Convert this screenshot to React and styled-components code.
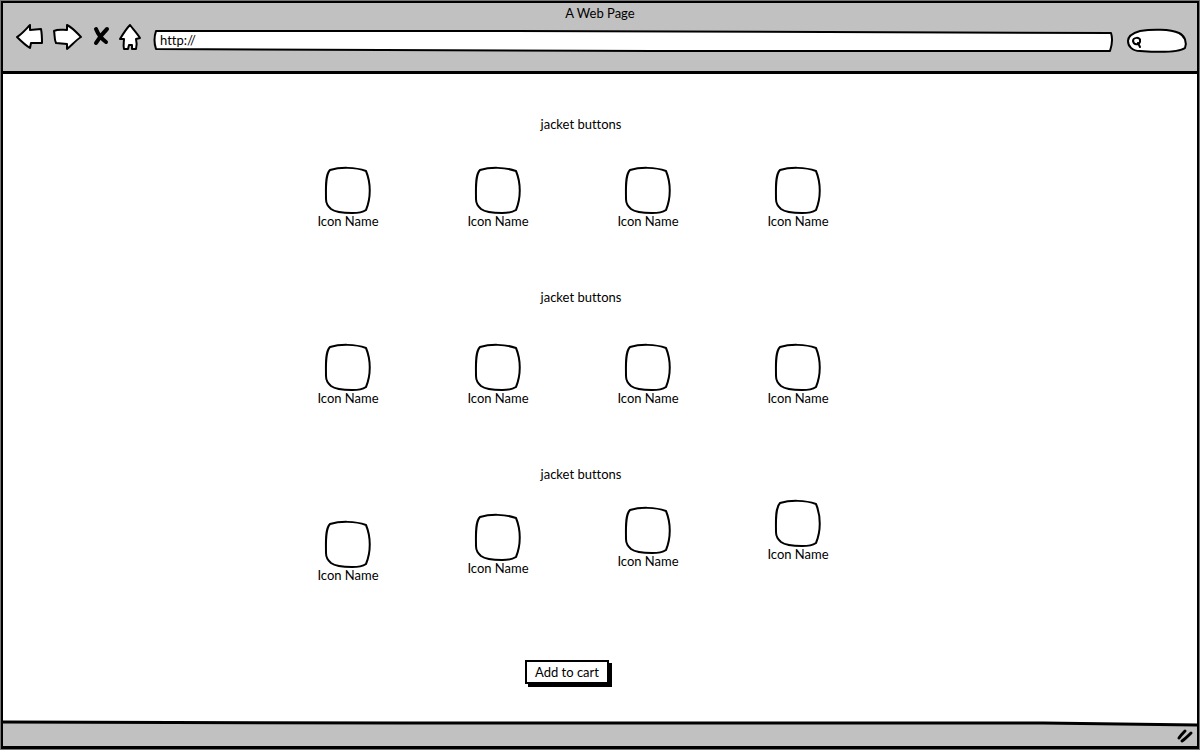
import React from "react";
import styled, { createGlobalStyle } from "styled-components";

const GlobalStyle = createGlobalStyle`
  * { box-sizing: border-box; }
  body { margin: 0; background: #777; }
  body, button, input {
    font-family: Lato, "Open Sans", sans-serif;
    font-size: 13px;
    line-height: 14px;
    font-variant-ligatures: none;
    color: #000;
  }
`;

const Frame = styled.div`
  display: flex;
  flex-direction: column;
  min-height: calc(100vh - 2px);
  margin: 1px;
  border: 2px solid #000;
  border-bottom-width: 3px;
  background: #fff;
`;

const Header = styled.header`
  background: #c1c1c1;
  border-bottom: 3px solid #000;
`;

const Title = styled.h1`
  margin: 0;
  font-size: 13px;
  font-weight: 400;
  line-height: 20px;
  text-align: center;
`;

const Toolbar = styled.div`
  display: flex;
  align-items: flex-start;
  gap: 12px;
  padding: 0 9px 18px 11px;
`;

const Nav = styled.nav`
  display: flex;
  gap: 6px;
`;

const NavButton = styled.button`
  display: block;
  width: ${(p) => p.$width}px;
  height: 30px;
  padding: 0;
  border: 0;
  background: none;
`;

const Drawing = styled.svg`
  display: block;
  width: 100%;
  height: 100%;
  fill: ${(p) => p.$fill || "#fff"};
  stroke: #000;
  stroke-width: ${(p) => p.$stroke || 2}px;
  stroke-linecap: round;
  stroke-linejoin: round;
  overflow: visible;

  path { vector-effect: non-scaling-stroke; }
`;

const Field = styled.div`
  display: grid;
  flex: ${(p) => (p.$width ? `0 0 ${p.$width}px` : "1")};
  height: 24px;
  margin-top: 6px;

  > * { grid-area: 1 / 1; min-width: 0; min-height: 0; }
`;

const TextInput = styled.input`
  width: 100%;
  height: 22px;
  padding: 0 8px 0 ${(p) => p.$indent}px;
  border: 0;
  background: none;
  outline: none;
`;

const Main = styled.main`
  flex: 1;
  display: flex;
  flex-direction: column;
  align-items: center;
  gap: 62px;
  padding: 43px 54px 34px 0;
`;

const Section = styled.section`
  display: flex;
  flex-direction: column;
  gap: ${(p) => p.$gap}px;
  width: 100%;
  max-width: 600px;
`;

const Heading = styled.h2`
  margin: 0;
  padding-left: 16px;
  font-size: 13px;
  font-weight: 400;
  text-align: center;
`;

const Choices = styled.div`
  display: grid;
  grid-template-columns: repeat(4, 1fr);
  align-items: end;
`;

const Choice = styled.figure`
  display: flex;
  flex-direction: column;
  align-items: center;
  margin: 0;
  padding-bottom: ${(p) => p.$lift}px;
`;

const Tile = styled.div`
  width: 48px;
  height: 48px;
`;

const CartButton = styled.button`
  margin: 16px 12px 0 0;
  height: 24px;
  padding: 0 8px;
  border: 2px solid #000;
  background: #fff;
  box-shadow: 3px 3px 0 #000;
`;

const Footer = styled.footer`
  display: flex;
  flex-direction: column;
  align-items: flex-end;
  height: 25px;
  background: #c1c1c1;
`;

const FooterEdge = styled.div`
  width: 100%;
  height: 6px;
`;

const Grip = styled.div`
  width: 18px;
  height: 16px;
  margin: 2px 2px 0 0;
`;

const rows = [
  { gap: 35, step: 0 },
  { gap: 39, step: 0 },
  { gap: 18, step: 7 },
];

function SketchIcon() {
  return (
    <Tile>
      <Drawing viewBox="0 0 48 48" aria-hidden="true">
        <path d="M6 4 C16 1 31 1 42 5 C47 17 47 32 42 44 C39 46 34 47 28 47 C18 47 11 46 7 43 C4 40 2 38 2 33 C2 23 1 9 6 4 Z" />
      </Drawing>
    </Tile>
  );
}

export default function App() {
  return (
    <>
      <GlobalStyle />
      <Frame>
        <Header>
          <Title>A Web Page</Title>
          <Toolbar>
            <Nav>
              <NavButton $width={32} aria-label="Back">
                <Drawing viewBox="0 0 32 30">
                  <path d="M3 14 C8 11 12 6 16 2 L16 7 L27 6 C28 11 28 15 28 20 L17 20 L16 25 C11 22 7 18 3 14 Z" />
                </Drawing>
              </NavButton>
              <NavButton $width={32} aria-label="Forward">
                <Drawing viewBox="0 0 32 30">
                  <path d="M2 8 C6 6 10 7 15 7 L15 2 C21 5 25 10 29 14 C24 17 20 22 15 26 L15 21 L4 20 C2 16 3 12 2 8 Z" />
                </Drawing>
              </NavButton>
              <NavButton $width={22} aria-label="Stop">
                <Drawing viewBox="0 0 22 30" $stroke={4} $fill="none">
                  <path d="M6 6 C8 11 12 16 16 19 M17 6 C13 10 9 15 6 20" />
                </Drawing>
              </NavButton>
              <NavButton $width={24} aria-label="Home">
                <Drawing viewBox="0 0 24 30">
                  <path d="M12 2 C15 6 19 10 22 15 L18 16 C19 20 19 23 18 26 L14 26 L14 22 L11 22 L10 26 L6 26 C5 22 6 19 6 16 L2 16 C5 11 8 6 12 2 Z" />
                </Drawing>
              </NavButton>
            </Nav>
            <Field>
              <Drawing viewBox="0 0 960 24" preserveAspectRatio="none" aria-hidden="true">
                <path d="M2 2 L360 2 L957 4 C959 10 958 16 956 22 L500 22 L2 20 C0 14 0 8 2 2 Z" />
              </Drawing>
              <TextInput aria-label="Address" defaultValue="http://" $indent={6} />
            </Field>
            <Field $width={62}>
              <Drawing viewBox="0 0 62 24" aria-hidden="true">
                <path d="M14 2 C26 0 44 0 53 4 C59 7 61 13 59 19 C52 24 28 23 14 22 C6 22 2 17 2 12 C2 7 7 4 14 2 Z" />
                <path d="M7 12 C7 8 14 8 14 11 C15 16 8 17 7 12 Z M12 14 L14 18" />
              </Drawing>
              <TextInput type="text" aria-label="Search" $indent={20} />
            </Field>
          </Toolbar>
        </Header>

        <Main>
          {rows.map((row, r) => (
            <Section key={r} $gap={row.gap}>
              <Heading>jacket buttons</Heading>
              <Choices>
                {[0, 1, 2, 3].map((i) => (
                  <Choice key={i} $lift={i * row.step}>
                    <SketchIcon />
                    <figcaption>Icon Name</figcaption>
                  </Choice>
                ))}
              </Choices>
            </Section>
          ))}
          <CartButton>Add to cart</CartButton>
        </Main>

        <Footer>
          <FooterEdge>
            <Drawing viewBox="0 0 1194 6" preserveAspectRatio="none" $stroke={3} aria-hidden="true">
              <path d="M0 -1 L1194 -1 L1194 4 L1040 2 L0 2 Z" stroke="none" />
              <path d="M0 1 L400 2 L1040 2 L1194 4" fill="none" />
            </Drawing>
          </FooterEdge>
          <Grip>
            <Drawing viewBox="0 0 18 16" $stroke={3} $fill="none" aria-hidden="true">
              <path d="M2 9 C4 6 6 4 8 2 M5 12 C8 10 11 7 14 4" />
            </Drawing>
          </Grip>
        </Footer>
      </Frame>
    </>
  );
}
